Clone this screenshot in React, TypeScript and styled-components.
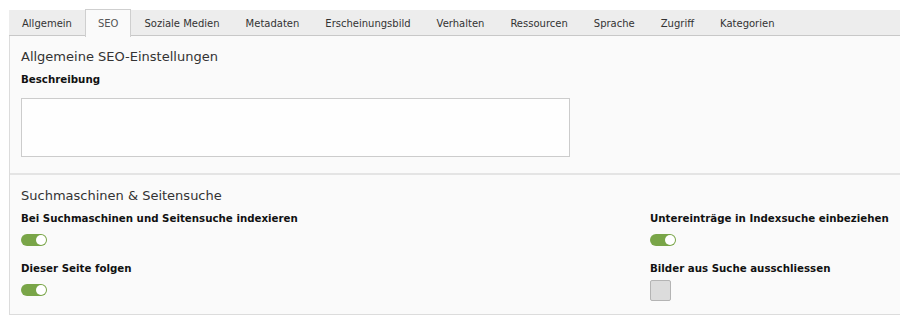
import React, { useState } from "react";
import styled, { createGlobalStyle, css } from "styled-components";

const GlobalStyle = createGlobalStyle`
  html, body {
    margin: 0;
    padding: 0;
    background: #ffffff;
  }
  body {
    font-family: "DejaVu Sans", Verdana, sans-serif;
    color: #333;
  }
`;

const Wrapper = styled.div`
  margin: 10px 0 0 9px;
`;

const TabBar = styled.div`
  display: flex;
  height: 26px;
  background: #ededed;
  border-bottom: 1px solid #c8c8c8;
  box-sizing: border-box;
`;

const Tab = styled.div<{ active?: boolean }>`
  display: flex;
  align-items: center;
  padding: 0 12px;
  font-size: 10px;
  color: #333;
  white-space: nowrap;
  box-sizing: border-box;
  height: 26px;
  border: 1px solid transparent;
  border-bottom: 0;
  cursor: pointer;

  ${({ active }) =>
    active &&
    css`
      background: #fafafa;
      border-color: #cfcfcf;
      color: #555;
      margin-top: -1px;
      margin-bottom: -1px;
      height: 28px;
      position: relative;
      z-index: 1;
    `}
`;

const Panel = styled.div`
  background: #fafafa;
  border-left: 1px solid #dcdcdc;
  border-bottom: 1px solid #dcdcdc;
`;

const Section = styled.div<{ last?: boolean }>`
  padding: 12px 12px 16px 11px;
  border-bottom: ${({ last }) => (last ? "0" : "2px solid #e4e4e4")};
  ${({ last }) =>
    last &&
    css`
      padding: 12px 12px 14px 11px;
    `}
`;

const Heading = styled.h2`
  margin: 0 0 6px;
  font-size: 13px;
  font-weight: normal;
  line-height: 18px;
  color: #333;
`;

const Label = styled.div`
  font-size: 10.25px;
  font-weight: bold;
  line-height: 14px;
  color: #111;
  white-space: nowrap;
`;

const TextArea = styled.textarea`
  display: block;
  margin-top: 12px;
  width: 549px;
  height: 59px;
  box-sizing: border-box;
  border: 1px solid #cccccc;
  background: #fefefe;
  resize: none;
  outline: none;
  font-family: inherit;
`;

const FieldGrid = styled.div`
  display: grid;
  grid-template-columns: 629px 1fr;
  row-gap: 11px;
`;

const Field = styled.div`
  display: flex;
  flex-direction: column;
  gap: 5px;
`;

const Control = styled.div`
  height: 20px;
  display: flex;
  align-items: center;
`;

const Toggle = styled.button<{ on: boolean }>`
  position: relative;
  width: 26px;
  height: 12px;
  padding: 0;
  border: 0;
  border-radius: 6px;
  background: ${({ on }) => (on ? "#79a548" : "#cccccc")};
  cursor: pointer;

  &::after {
    content: "";
    position: absolute;
    top: 1px;
    left: ${({ on }) => (on ? "15px" : "1px")};
    width: 10px;
    height: 10px;
    border-radius: 50%;
    background: #ffffff;
  }
`;

const CheckBox = styled.button<{ checked: boolean }>`
  width: 21px;
  height: 21px;
  padding: 0;
  box-sizing: border-box;
  border: 1px solid #b4b4b4;
  border-radius: 2px;
  background: #dcdcdc;
  cursor: pointer;
`;

const tabs = [
  "Allgemein",
  "SEO",
  "Soziale Medien",
  "Metadaten",
  "Erscheinungsbild",
  "Verhalten",
  "Ressourcen",
  "Sprache",
  "Zugriff",
  "Kategorien",
];

const App: React.FC = () => {
  const [active, setActive] = useState("SEO");
  const [index, setIndex] = useState(true);
  const [sub, setSub] = useState(true);
  const [follow, setFollow] = useState(true);
  const [noImages, setNoImages] = useState(false);

  return (
    <Wrapper>
      <GlobalStyle />
      <TabBar>
        {tabs.map((t) => (
          <Tab key={t} active={t === active} onClick={() => setActive(t)}>
            {t}
          </Tab>
        ))}
      </TabBar>
      <Panel>
        <Section>
          <Heading>Allgemeine SEO-Einstellungen</Heading>
          <Label>Beschreibung</Label>
          <TextArea />
        </Section>
        <Section last>
          <Heading>Suchmaschinen &amp; Seitensuche</Heading>
          <FieldGrid>
            <Field>
              <Label>Bei Suchmaschinen und Seitensuche indexieren</Label>
              <Control>
                <Toggle on={index} onClick={() => setIndex(!index)} />
              </Control>
            </Field>
            <Field>
              <Label>Untereinträge in Indexsuche einbeziehen</Label>
              <Control>
                <Toggle on={sub} onClick={() => setSub(!sub)} />
              </Control>
            </Field>
            <Field>
              <Label>Dieser Seite folgen</Label>
              <Control>
                <Toggle on={follow} onClick={() => setFollow(!follow)} />
              </Control>
            </Field>
            <Field>
              <Label>Bilder aus Suche ausschliessen</Label>
              <Control>
                <CheckBox
                  checked={noImages}
                  onClick={() => setNoImages(!noImages)}
                />
              </Control>
            </Field>
          </FieldGrid>
        </Section>
      </Panel>
    </Wrapper>
  );
};

export default App;
